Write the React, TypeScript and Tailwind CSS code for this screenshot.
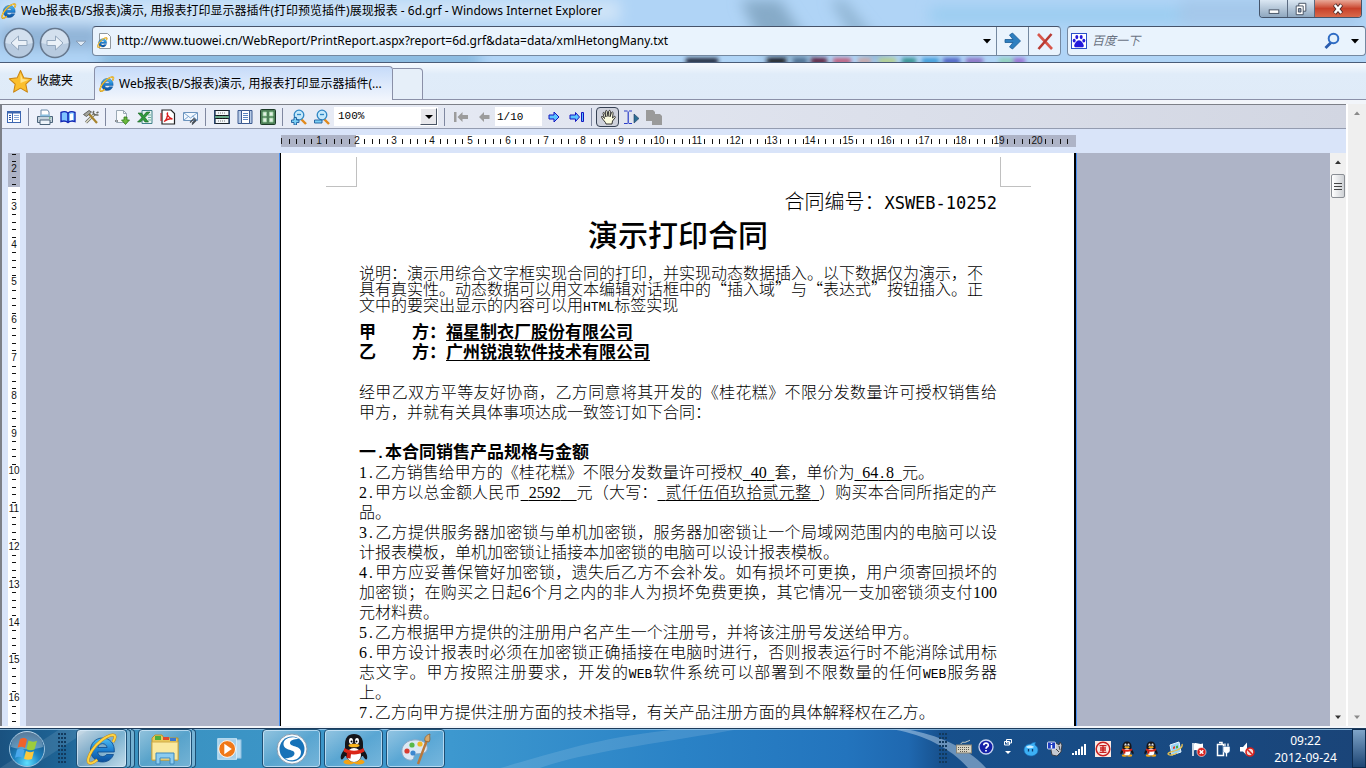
import type { ReactNode } from 'react'

const CM = 37.8

const TOP_BLOBS = [
  [686, 32, '#1c2430'], [767, 19, '#16181f'], [793, 14, '#4a6a8c'], [811, 16, '#5a1830'],
  [833, 18, '#c05a78'], [858, 13, '#c9a5a5'], [879, 17, '#b5d08a'], [902, 14, '#2f8f8a'],
  [922, 17, '#3a9ad8'], [943, 17, '#4a5cc0'], [966, 17, '#8a6cc0'], [999, 14, '#8fd0b8'], [1013, 12, '#9a6cd0'],
] as const

type Line = { text?: string; parts?: { t: string; u?: boolean }[]; justify?: boolean; bold?: boolean }

const LINES: Line[] = [
  { bold: true, parts: [{ t: '甲\u00a0\u00a0\u00a0\u00a0方：' }, { t: '福星制衣厂股份有限公司', u: true }] },
  { bold: true, parts: [{ t: '乙\u00a0\u00a0\u00a0\u00a0方：' }, { t: '广州锐浪软件技术有限公司', u: true }] },
  {},
  { justify: true, text: '经甲乙双方平等友好协商，乙方同意将其开发的《桂花糕》不限分发数量许可授权销售给' },
  { text: '甲方，并就有关具体事项达成一致签订如下合同：' },
  {},
  { bold: true, text: '一.本合同销售产品规格与金额' },
  {
    parts: [
      { t: '1.乙方销售给甲方的《桂花糕》不限分发数量许可授权' }, { t: '\u00a040\u00a0', u: true },
      { t: '套，单价为' }, { t: '\u00a064.8\u00a0', u: true }, { t: '元。' },
    ],
  },
  {
    justify: true,
    parts: [
      { t: '2.甲方以总金额人民币' }, { t: '\u00a02592\u00a0\u00a0', u: true }, { t: '元（大写：' },
      { t: '\u00a0贰仟伍佰玖拾贰元整\u00a0', u: true }, { t: '）购买本合同所指定的产' },
    ],
  },
  { text: '品。' },
  { justify: true, text: '3.乙方提供服务器加密锁与单机加密锁，服务器加密锁让一个局域网范围内的电脑可以设' },
  { text: '计报表模板，单机加密锁让插接本加密锁的电脑可以设计报表模板。' },
  { justify: true, text: '4.甲方应妥善保管好加密锁，遗失后乙方不会补发。如有损坏可更换，用户须寄回损坏的' },
  { justify: true, text: '加密锁；在购买之日起6个月之内的非人为损坏免费更换，其它情况一支加密锁须支付100' },
  { text: '元材料费。' },
  { text: '5.乙方根据甲方提供的注册用户名产生一个注册号，并将该注册号发送给甲方。' },
  { justify: true, text: '6.甲方设计报表时必须在加密锁正确插接在电脑时进行，否则报表运行时不能消除试用标' },
  { justify: true, text: '志文字。甲方按照注册要求，开发的WEB软件系统可以部署到不限数量的任何WEB服务器' },
  { text: '上。' },
  { text: '7.乙方向甲方提供注册方面的技术指导，有关产品注册方面的具体解释权在乙方。' },
]

// half-width characters take half a CJK cell
function Mixed({ text, bold }: { text: string; bold?: boolean }) {
  const runs = text.split(/([0-9]+|[A-Za-z.\u00a0]+)/).filter(Boolean)
  return (
    <>
      {runs.map((r, i) => {
        if (/^[0-9]/.test(r)) return <span key={i} className="font-['Liberation_Serif',serif] text-[16px]">{r}</span>
        if (/^[A-Za-z.\u00a0]/.test(r)) {
          return (
            <span key={i} className={bold ? "font-['Liberation_Mono',monospace] text-[15px]" : "font-['Liberation_Mono',monospace] text-[13px]"}>
              {r}
            </span>
          )
        }
        return r
      })}
    </>
  )
}

function DocLine({ line }: { line: Line }) {
  const parts: { t: string; u?: boolean }[] = line.parts ?? [{ t: line.text ?? '' }]
  return (
    <p
      className={`h-5 leading-5 whitespace-nowrap ${line.bold ? 'text-[17px] font-bold' : 'text-[16px]'} ${
        line.justify ? '[text-align-last:justify]' : ''
      }`}
    >
      {parts.map((p, i) =>
        p.u ? (
          <u key={i} className="underline-offset-2 decoration-1"><Mixed text={p.t} bold={line.bold} /></u>
        ) : (
          <Mixed key={i} text={p.t} bold={line.bold} />
        ),
      )}
    </p>
  )
}

/* ---------- icons ---------- */

function Svg({ size = 16, box = 16, children }: { size?: number; box?: number; children: ReactNode }) {
  return (
    <svg width={size} height={size} viewBox={`0 0 ${box} ${box}`} fill="none" aria-hidden="true" className="shrink-0">
      {children}
    </svg>
  )
}

function IeIcon({ size = 16 }: { size?: number }) {
  return (
    <Svg size={size} box={32}>
      <defs>
        <linearGradient id="ieBlue" x1="0" y1="0" x2="0" y2="1">
          <stop offset="0" stopColor="#4fc0f5" />
          <stop offset="0.5" stopColor="#1c7fd0" />
          <stop offset="1" stopColor="#0c4f9c" />
        </linearGradient>
      </defs>
      <path d="M16.500 5C9.500 5 4.500 10.500 4.500 17S9.500 29 16.500 29c5.300 0 9.400-3 11-7.500h-7c-.8 1.200-2.200 2-4 2-2.600 0-4.600-1.800-4.800-4.500H28.300C29 11 24 5 16.500 5Zm-4.700 9.500c.5-2.300 2.300-3.800 4.700-3.800s4.200 1.500 4.600 3.800Z" fill="url(#ieBlue)" stroke="#0d4a8c" strokeWidth="0.8" />
      <path d="M27 9C30 4.500 29.500 1.800 26.500 2 21 2.300 11 9.500 6 17.500 2.500 23 .8 28.500 3.200 30c1.800 1 5-.8 8-3.300" stroke="#c98a10" strokeWidth="3" />
      <path d="M27 9C30 4.500 29.500 1.800 26.500 2 21 2.300 11 9.500 6 17.500 2.500 23 .8 28.500 3.200 30c1.800 1 5-.8 8-3.300" stroke="#fcd345" strokeWidth="2" />
    </Svg>
  )
}

function QqIcon({ size = 16 }: { size?: number }) {
  return (
    <Svg size={size} box={32}>
      <ellipse cx="11" cy="29" rx="5.500" ry="2.600" fill="#f5a313" />
      <ellipse cx="21" cy="29" rx="5.500" ry="2.600" fill="#f5a313" />
      <path d="M7 16c-3 3-5 7-4 10 1 1.500 3-1 4-3h18c1 2 3 4.500 4 3 1-3-1-7-4-10Z" fill="#15151a" />
      <path d="M16 1C10 1 7 5 7 11v7c0 6 4 11 9 11s9-5 9-11v-7c0-6-3-10-9-10Z" fill="#15151a" />
      <ellipse cx="16" cy="22" rx="7" ry="7" fill="#fff" />
      <ellipse cx="13" cy="8" rx="2" ry="2.900" fill="#fff" />
      <ellipse cx="19" cy="8" rx="2" ry="2.900" fill="#fff" />
      <circle cx="13.500" cy="8.500" r="1" fill="#000" />
      <circle cx="18.500" cy="8.500" r="1" fill="#000" />
      <ellipse cx="16" cy="12.500" rx="5.500" ry="1.800" fill="#f8b31a" />
      <path d="M6.500 15c6 3.500 13 3.500 19 0l1 3.500c-7 4-14 4-21 0Z" fill="#dc2618" />
      <path d="M9 19l-.5 6 4 .5.5-5Z" fill="#c41c12" />
    </Svg>
  )
}

const ICONS: Record<string, ReactNode> = {
  outline: (
    <>
      <rect x="1.500" y="2.500" width="13" height="11" fill="#fff" stroke="#3c66b0" />
      <path d="M1.500 3.500h13" stroke="#3c66b0" strokeWidth="2" />
      <path d="M6.500 4v9" stroke="#3c66b0" />
      <path d="M3 6.500h2M3 8.500h2M3 10.500h2" stroke="#2a50a0" />
      <path d="M8 6.500h5M8 8.500h5M8 10.500h5" stroke="#8aa8d8" />
    </>
  ),
  print: (
    <>
      <path d="M4 7V1h6.500L12 3v4" fill="#fff" stroke="#6a8aa8" />
      <path d="M.5 7.500h15v6H.5Z" fill="#c7d4de" stroke="#4a6278" />
      <path d="M2.500 7.500 4 5.500h8l1.500 2" fill="#8ac0e0" />
      <path d="M3 11h10v4.500H3Z" fill="#eef4fa" stroke="#4a6278" />
      <path d="M12 9h1.500" stroke="#30a040" />
    </>
  ),
  book: (
    <>
      <path d="M1 3.500c3-1.500 5-1 7 .5 2-1.500 4-2 7-.5v9c-3-1-5-.7-7 1-2-1.700-4-2-7-1Z" fill="#7fc4ff" stroke="#1428b4" strokeWidth="1.400" />
      <path d="M8 4v9.500" stroke="#1428b4" strokeWidth="1.600" />
      <path d="M10 5c1-.7 2-.7 3-.5v6.500c-1-.2-2 0-3 .5Z" fill="#fff" />
    </>
  ),
  tools: (
    <>
      <path d="M3 13.500 11.500 5" stroke="#6a6a60" strokeWidth="2.800" />
      <path d="M3 13.500 11.500 5" stroke="#e8e4d0" strokeWidth="1.200" />
      <path d="M11 2c-1.500 1.500-1 4.500 4.500 4M15.500 3l-2 1" stroke="#6a6a60" strokeWidth="1.600" />
      <path d="M6 5l8 9" stroke="#a8842c" strokeWidth="2.200" />
      <path d="M.5 5.500 6 1.500l2.500 1.500-5 4.500Z" fill="#a4a49c" stroke="#4a4a46" strokeWidth="0.800" />
    </>
  ),
  exportPage: (
    <>
      <path d="M2.500 1.500h7l3 3v9h-10Z" fill="#f8fafc" stroke="#9aa8b4" />
      <path d="M9.500 1.500v3h3" stroke="#9aa8b4" />
      <path d="M1 12h4" stroke="#222" strokeDasharray="1 1" />
      <path d="M10 8h3v3h2.500l-4 4.500-4-4.500H10Z" fill="#6cb83c" stroke="#2f7a1c" strokeWidth="0.800" />
    </>
  ),
  excel: (
    <>
      <path d="M5 1.500h10v13H5Z" fill="#e8f4f2" stroke="#3f8088" />
      <path d="M11 6h3M11 8.500h3M11 11h3" stroke="#6ab0a0" />
      <path d="M1 4h3.500l2 2.500L9.500 3H13L8 8.500l3.500 4.500H8L6 10.500 3.500 13H.5L5 8.500Z" fill="#2f9a3c" stroke="#14601e" strokeWidth="0.600" />
    </>
  ),
  pdf: (
    <>
      <path d="M2 1h9l3.500 3.500V15H2Z" fill="#fff" stroke="#222" strokeWidth="1.200" />
      <path d="M1 4v8" stroke="#d01010" strokeWidth="1" />
      <path d="M4 12.500c2-1 4-5 3.500-8.500C6.800 4 7 8 12.500 10c-3-.8-6 .5-8.500 2.500" stroke="#dc1c1c" strokeWidth="1.300" />
    </>
  ),
  mail: (
    <>
      <path d="M.5 3.500h14v8H.5Z" fill="#f2f8ff" stroke="#6b93bd" />
      <path d="M1 4l6.500 5L14 4M1 11l5-4M14 11 9.500 7" stroke="#7aa4d0" />
      <path d="M7 13.500 11 9.500l1.500 1.500-3.500 3.500M9 15.500l4-4" stroke="#444c55" strokeWidth="1.200" />
    </>
  ),
  pageWidth: (
    <>
      <path d="M1 1.500h14v5H1ZM1 9.500h14v5H1Z" fill="#f4f8fa" stroke="#1a2228" />
      <path d="M.5 1v14M15.500 1v14" stroke="#28446c" strokeWidth="1.600" />
      <path d="M1 8h14" stroke="#4a9a70" strokeWidth="1.600" />
      <path d="M4 4h8M4 12h8" stroke="#777" strokeDasharray="1 1" />
      <path d="M3 6.500h10M3 9.500h10" stroke="#111" strokeDasharray="2 1" />
    </>
  ),
  page: (
    <>
      <path d="M1 1.500h14v13H1Z" fill="#b8cce8" stroke="#3c5a90" />
      <path d="M4.500 1.500h8v13h-8Z" fill="#fff" stroke="#3c5a90" />
      <path d="M6 4.500h5M6 6.500h5M6 8.500h5M6 10.500h5" stroke="#5a84c0" />
    </>
  ),
  pages: (
    <>
      <rect x="0.500" y="0.500" width="15" height="15" rx="1" fill="#4f8058" stroke="#1c3a26" />
      <path d="M3 3h3.500v4H3ZM9.500 3H13v4H9.500ZM3 9h3.500v4H3ZM9.500 9H13v4H9.500Z" fill="#e4f0e4" stroke="#9ad0a0" strokeWidth="0.800" />
    </>
  ),
  zoomIn: (
    <>
      <path d="M10 10l5 5" stroke="#e08a1c" strokeWidth="2.400" />
      <circle cx="8" cy="6" r="4.800" fill="#c4e8fb" stroke="#2f86c4" strokeWidth="1.300" />
      <path d="M6 5.500h4" stroke="#2f86c4" strokeWidth="1.300" />
      <path d="M3 8.500h2.500V11H8v2.500H5.500V16H3v-2.500H.5V11H3Z" fill="#7cd0f5" stroke="#1c5c9c" strokeWidth="0.900" />
    </>
  ),
  zoomOut: (
    <>
      <path d="M10 10l5 5" stroke="#e08a1c" strokeWidth="2.400" />
      <circle cx="8" cy="6" r="4.800" fill="#c4e8fb" stroke="#2f86c4" strokeWidth="1.300" />
      <path d="M6 5.500h4" stroke="#2f86c4" strokeWidth="1.300" />
      <path d="M.5 11h7.500v3H.5Z" fill="#7cd0f5" stroke="#1c5c9c" strokeWidth="0.900" />
    </>
  ),
  first: <path d="M1 3h2.500v10H1ZM4.500 8 9.500 3v3H15v4H9.500v3Z" fill="#9c9c9c" />,
  prev: <path d="M3 8l5-5v3h5.500v4H8v3Z" fill="#9c9c9c" />,
  next: <path d="M13 8 8 3v3H3v4h5v3Z" fill="#5cc4ff" stroke="#1414c0" />,
  last: (
    <>
      <path d="M10.500 8l-4-4.500V6H1v4h5.500v2.500Z" fill="#5cc4ff" stroke="#1414c0" />
      <path d="M12.500 3.500h2v9h-2Z" fill="#5cc4ff" stroke="#1414c0" />
    </>
  ),
  hand: (
    <path
      d="M6 15c0-2-3.500-4-4.500-7C1.300 7 2.500 7 3.500 8.500L4.500 9.500 3 4.500c-.2-1.300 1.200-1.500 1.600-.3L6 8 5.500 2.500C5.500 1.200 7 1.200 7.200 2.500L8 7.500l.7-5.300c.3-1.200 1.800-1 1.700.3L10 7.800l1.500-4.300c.5-1 1.900-.6 1.600.6L12.500 9l1.700-1.500c.9-.4 1.500.3.900 1.200L12.500 12 12 15Z"
      fill="#fdfde0"
      stroke="#222"
      strokeWidth="0.900"
    />
  ),
  textSelect: (
    <>
      <path d="M1 2h3.500M6 2h3M1 14.500h3.500M6 14.500h3M5.200 2.500v12" stroke="#2a3cc8" strokeWidth="1.200" />
      <path d="M11 5l5 4.500-5 4.500Z" fill="#2a6e94" stroke="#223a60" strokeWidth="0.600" />
    </>
  ),
  copy: <path d="M0 1h7l2 2v2h5l2 2v9H6v-4H0Z" fill="#9a9a9a" />,
}

function Tool({ name, label, active }: { name: string; label: string; active?: boolean }) {
  return (
    <button
      type="button"
      aria-label={label}
      className={`flex h-5 w-[23px] shrink-0 items-center justify-center ${
        active ? 'rounded-sm border border-gray-700 bg-[#cfd2dc]' : ''
      }`}
    >
      <Svg>{ICONS[name]}</Svg>
    </button>
  )
}

function Sep() {
  return <span className="mr-1 ml-[3px] h-[18px] w-px shrink-0 bg-[#8088a0]" />
}

/* ---------- browser chrome ---------- */

function TitleBar() {
  return (
    <div className="flex h-[26px] items-start">
      <h1 className="flex h-[22px] min-w-0 flex-1 items-center gap-1 pl-px text-[12px] text-black">
        <IeIcon />
        <span className="truncate">Web报表(B/S报表)演示, 用报表打印显示器插件(打印预览插件)展现报表 - 6d.grf - Windows Internet Explorer</span>
      </h1>
      <div className="mr-1 flex h-[18px] overflow-hidden rounded-b border border-t-0 border-[#44546a]">
        <button type="button" aria-label="最小化" className="flex w-7 items-center justify-center border-r border-[#5a6a80] bg-linear-to-b from-[#dbe7f3] via-[#b4c6d8] via-50% to-[#8fa7bf]">
          <Svg size={14}><rect x="2.500" y="9" width="11" height="4" fill="#fff" stroke="#3a4658" /></Svg>
        </button>
        <button type="button" aria-label="还原" className="flex w-[27px] items-center justify-center border-r border-[#5a6a80] bg-linear-to-b from-[#dbe7f3] via-[#b4c6d8] via-50% to-[#8fa7bf]">
          <Svg size={14}>
            <path d="M5.500 1.500h8v9h-8Z" fill="#fff" stroke="#3a4658" />
            <path d="M2.500 4.500h8v10h-8Z" fill="#fff" stroke="#3a4658" />
            <path d="M5 7.500h3v4H5Z" fill="#8fa0b4" stroke="#3a4658" />
          </Svg>
        </button>
        <button type="button" aria-label="关闭" className="flex w-[46px] items-center justify-center bg-linear-to-b from-[#e8a898] via-[#c8412a] via-50% to-[#d9694a]">
          <Svg size={14}>
            <path d="M4 3l8 10M12 3 4 13" stroke="#4a2a2a" strokeWidth="4.600" />
            <path d="M4.300 3.500l7.400 9M11.700 3.500l-7.400 9" stroke="#fff" strokeWidth="2.800" />
          </Svg>
        </button>
      </div>
    </div>
  )
}

function NavCircle({ flip }: { flip?: boolean }) {
  return (
    <button type="button" aria-label={flip ? '前进' : '后退'} className="shrink-0">
      <Svg size={32} box={32}>
        <circle cx="16" cy="16" r="14.500" fill="#b7cadf" stroke="#66788e" strokeWidth="1.600" />
        <path d="M2.500 16a13.500 13.500 0 0 1 27 0c-8 2-19 2-27 0Z" fill="#d3e0ee" />
        <path
          d={flip ? 'M24 16l-7.500-7v4.500H8v5h8.500V23Z' : 'M8 16l7.500-7v4.500H24v5h-8.500V23Z'}
          fill="#eaf1f8"
          stroke="#93a7bd"
        />
      </Svg>
    </button>
  )
}

function AddressBar() {
  const box = 'flex h-[30px] items-center rounded-sm border border-[#7488a0] border-t-[#46536a] bg-[#e9f3fd]'
  return (
    <div className="flex h-9 items-start">
      <div className="flex h-[33px] w-[92px] shrink-0 items-center gap-1 pl-[3px]">
        <div className="flex gap-1">
          <NavCircle />
          <NavCircle flip />
        </div>
        <Svg size={12}><path d="M1.500 5.500h13L8 12Z" fill="#dfeaf5" stroke="#8298b2" strokeWidth="1.200" /></Svg>
      </div>
      <div className={`${box} flex-1`}>
        <span className="relative ml-1 flex h-4 w-4 shrink-0 items-center justify-center">
          <Svg><path d="M2.500.5h8l3 3v12h-11Z" fill="#fff" stroke="#90989f" /></Svg>
          <span className="absolute top-1 left-0"><IeIcon size={11} /></span>
        </span>
        <input
          aria-label="地址"
          className="ml-1 min-w-0 flex-1 bg-transparent text-[12px] text-black outline-none"
          defaultValue="http://www.tuowei.cn/WebReport/PrintReport.aspx?report=6d.grf&data=data/xmlHetongMany.txt"
        />
        <button type="button" aria-label="地址历史" className="flex w-[18px] justify-center">
          <Svg size={8} box={8}><path d="M0 2h8L4 6.500Z" fill="#000" /></Svg>
        </button>
        <button type="button" aria-label="转到" className="flex h-full w-8 items-center justify-center border-l border-[#7488a0]">
          <Svg size={18} box={18}>
            <path d="M1 7.500h8L5.500 3 8.500 1l8 8-8 8-3-2L9 10.500H1Z" fill="#2e7fc0" stroke="#1b5a94" strokeWidth="0.800" />
          </Svg>
        </button>
        <button type="button" aria-label="停止" className="flex h-full w-8 items-center justify-center border-l border-[#7488a0]">
          <Svg size={18} box={18}>
            <path d="M2 2l14 15" stroke="#d8564a" strokeWidth="2.600" />
            <path d="M15.500 2 2.500 17" stroke="#b83a32" strokeWidth="2.600" />
          </Svg>
        </button>
      </div>
      <div className={`${box} ml-1.5 w-[299px] shrink-0`}>
        <span className="ml-[3px] flex h-4 w-4 shrink-0 items-center justify-center border border-[#2a50c8] bg-white">
          <Svg size={14}>
            <ellipse cx="5.500" cy="3.500" rx="1.700" ry="2.400" fill="#2319dc" />
            <ellipse cx="10.500" cy="3.500" rx="1.700" ry="2.400" fill="#2319dc" />
            <ellipse cx="2.500" cy="7.500" rx="1.700" ry="2.200" fill="#2319dc" />
            <ellipse cx="13.500" cy="7.500" rx="1.700" ry="2.200" fill="#2319dc" />
            <path d="M8 7c2.500 0 5.500 4 5.500 6.500S10 15 8 15s-5.500 1-5.500-1.500S5.500 7 8 7Z" fill="#2319dc" />
          </Svg>
        </span>
        <input
          aria-label="搜索"
          placeholder="百度一下"
          className="ml-[5px] min-w-0 flex-1 bg-transparent text-[12px] italic outline-none placeholder:text-gray-500"
        />
        <button type="button" aria-label="搜索" className="mr-2.5">
          <Svg size={18} box={18}>
            <path d="M8 10.500 2.500 16" stroke="#2a5cae" strokeWidth="2.800" />
            <circle cx="10.500" cy="6.500" r="4.800" fill="#e4f1fc" stroke="#2f6cc4" strokeWidth="2" />
          </Svg>
        </button>
        <button type="button" aria-label="搜索选项" className="mr-1.5">
          <Svg size={8} box={8}><path d="M0 2h8L4 6.500Z" fill="#000" /></Svg>
        </button>
      </div>
    </div>
  )
}

function TabBar() {
  return (
    <div className="flex h-[38px] items-end border-t border-[#4a5c78] bg-linear-to-b from-[#f6f9fe] via-[#e0ecf9] via-30% to-[#dfebf8]">
      <button type="button" className="flex h-full w-[94px] items-center gap-1 border-b border-[#8a90a8] pl-2 text-[12px]">
        <Svg size={25} box={24}>
          <path d="M12 1.500l3.200 7 7.500.9-5.600 5.200 1.500 7.600L12 18.400 5.400 22.200l1.500-7.600L1.300 9.400l7.500-.9Z" fill="#fbbf2d" stroke="#c98412" strokeLinejoin="round" />
          <path d="M12 4l2 5.500 6 .8-8 3.200Z" fill="#ffe38a" />
        </Svg>
        收藏夹
      </button>
      <button type="button" className="flex h-[34px] w-[299px] items-center gap-1 rounded-t border border-b-0 border-[#8a90a8] bg-linear-to-b from-[#c6dbf9] to-[#f2f6fd] pl-1 text-[12px]">
        <IeIcon />
        <span className="whitespace-nowrap">Web报表(B/S报表)演示, 用报表打印显示器插件(...</span>
      </button>
      <button type="button" aria-label="新选项卡" className="h-8 w-[30px] rounded-tr border border-l-0 border-[#8a90a8] bg-[#e6eff9]" />
      <div className="flex-1 self-stretch border-b border-[#8a90a8]" />
    </div>
  )
}

/* ---------- report viewer ---------- */

function ReportToolbar() {
  return (
    <div className="flex h-6 items-center border-b border-[#949cb0] bg-linear-to-r from-[#eef2fb] to-[#d2d6e2]">
      <Tool name="outline" label="目录" />
      <Sep />
      <Tool name="print" label="打印" />
      <Tool name="book" label="页面设置" />
      <Tool name="tools" label="打印设置" />
      <Sep />
      <Tool name="exportPage" label="导出" />
      <Tool name="excel" label="导出Excel" />
      <Tool name="pdf" label="导出PDF" />
      <Tool name="mail" label="发送邮件" />
      <Sep />
      <Tool name="pageWidth" label="页宽" />
      <Tool name="page" label="整页" />
      <Tool name="pages" label="多页" />
      <Sep />
      <Tool name="zoomIn" label="放大" />
      <Tool name="zoomOut" label="缩小" />
      <div className="relative mr-[3px] ml-px h-[19px] w-[104px] shrink-0">
        <select aria-label="显示比例" className="block h-full w-full appearance-none bg-white pl-1 font-['Liberation_Mono',monospace] text-[11px] text-black outline-none">
          <option>100%</option>
        </select>
        <span className="pointer-events-none absolute top-px right-px flex h-[17px] w-[17px] items-center justify-center border border-white border-r-gray-600 border-b-gray-600 bg-[#e8e8ec]">
          <Svg size={8} box={8}><path d="M0 2h8L4 6Z" fill="#000" /></Svg>
        </span>
      </div>
      <Sep />
      <Tool name="first" label="首页" />
      <Tool name="prev" label="上一页" />
      <input
        aria-label="页码"
        defaultValue="1/10"
        className="h-[19px] w-[47px] shrink-0 bg-white pl-0.5 font-['Liberation_Mono',monospace] text-[11px] text-black outline-none"
      />
      <Tool name="next" label="下一页" />
      <Tool name="last" label="末页" />
      <Sep />
      <Tool name="hand" label="拖动" active />
      <Tool name="textSelect" label="选择文本" />
      <Tool name="copy" label="复制" />
    </div>
  )
}

function TopRuler() {
  const ticks = Array.from({ length: 105 }, (_, i) => i)
  return (
    <svg width="795" height="12" viewBox="0 0 795 12" className="block" aria-hidden="true">
      <rect width="795" height="12" fill="#aeb4c7" />
      <rect x="75" width="643" height="12" fill="#fff" />
      {ticks.map(i => {
        const x = Math.round(i * CM / 5)
        if (i % 5 !== 0) return <rect key={i} x={x} y="4" width="1" height="5" fill="#111" />
        return i === 0
          ? <path key={i} d="M0 3v6" stroke="#222" strokeWidth="2" />
          : (
            <text key={i} x={x} y="9" textAnchor="middle" className="font-['Liberation_Sans',sans-serif] text-[10px]" fill="#111">
              {i / 5}
            </text>
          )
      })}
    </svg>
  )
}

function SideRuler() {
  const start = 2
  return (
    <svg width="12" height="574" viewBox="0 0 12 574" className="block" aria-hidden="true">
      <rect width="12" height="34" fill="#aeb4c7" />
      {Array.from({ length: 76 }, (_, i) => i - 2).map(i => {
        const y = Math.round(16 + i * CM / 5)
        return i % 5 !== 0
          ? <rect key={i} x="4" y={y} width="4" height="1" fill="#111" />
          : (
            <text key={i} x="6" y={y + 3} textAnchor="middle" className="font-['Liberation_Sans',sans-serif] text-[10px]" fill="#111">
              {start + i / 5}
            </text>
          )
      })}
    </svg>
  )
}

function ReportPage() {
  return (
    <div className="mx-auto flex h-full w-[798px] border-x border-[#4a90f0] bg-black pr-0.5 pl-px">
      <article className="flex-1 bg-white font-['Noto_Sans_CJK_SC',sans-serif] font-light text-black [text-spacing-trim:space-all]">
        <div className="flex justify-between pt-1 pr-[43px] pl-[45px]">
          <span className="h-[30px] w-[31px] border-r border-b border-[#c0c0c0]" />
          <span className="h-[30px] w-[31px] border-b border-l border-[#c0c0c0]" />
        </div>
        <div className="pr-[77px] pl-[78px]">
          <p className="h-7 text-right text-[20px] leading-7">
            合同编号：<span className="font-['DejaVu_Sans_Mono',monospace] text-[17px]">XSWEB-10252</span>
          </p>
          <h2 className="text-center text-[30px] leading-9 font-medium">演示打印合同</h2>
          <div className="mt-[13px] text-[16px] leading-4 whitespace-nowrap">
            <p className="h-4">说明：演示用综合文字框实现合同的打印，并实现动态数据插入。以下数据仅为演示，不</p>
            <p className="h-4">具有真实性。动态数据可以用文本编辑对话框中的“插入域”与“表达式”按钮插入。正</p>
            <p className="h-4">文中的要突出显示的内容可以用<Mixed text="HTML" />标签实现</p>
          </div>
          <div className="mt-[9px]">
            {LINES.map((l, i) => <DocLine key={i} line={l} />)}
          </div>
        </div>
      </article>
    </div>
  )
}

function ScrollArrow({ up, pale }: { up?: boolean; pale?: boolean }) {
  return (
    <button type="button" aria-label={up ? '向上滚动' : '向下滚动'} className="flex h-[18px] w-full items-center justify-center">
      <Svg size={8} box={8}><path d={up ? 'M1 6h6L4 2.500Z' : 'M1 2.500h6L4 6Z'} fill={pale ? '#8a8a8a' : '#333'} /></Svg>
    </button>
  )
}

function ReportViewer() {
  return (
    <div className="flex min-h-0 flex-1 border-b-2 border-[#f4f6fa] bg-[#eef0f2]">
      <div className="flex min-w-0 flex-1 flex-col border-t border-l-2 border-[#7d8088] bg-[#d9e4f9]">
        <ReportToolbar />
        <div className="flex h-6 shrink-0 items-center pr-4 pl-6">
          <div className="mx-auto flex w-[798px] pl-0.5"><TopRuler /></div>
        </div>
        <div className="flex min-h-0 flex-1">
          <div className="flex w-6 shrink-0 overflow-hidden pl-1.5">
            <div className="w-3 bg-white"><SideRuler /></div>
          </div>
          <div className="min-w-0 flex-1 overflow-hidden bg-[#aeb4c7]"><ReportPage /></div>
          <div className="flex w-4 shrink-0 flex-col bg-[#f0f0f0]">
            <ScrollArrow up />
            <div className="mx-px mt-[3px] flex h-6 flex-col items-center justify-center gap-0.5 rounded-xs border border-[#8a8e94] bg-linear-to-r from-white to-[#cfd2d6]">
              <span className="h-px w-2 bg-[#444]" />
              <span className="h-px w-2 bg-[#444]" />
              <span className="h-px w-2 bg-[#444]" />
            </div>
            <div className="flex-1" />
            <ScrollArrow />
          </div>
        </div>
      </div>
      <div className="flex w-5 shrink-0 flex-col justify-between border-l-2 border-white bg-[#efefef]">
        <ScrollArrow up pale />
        <ScrollArrow pale />
      </div>
    </div>
  )
}

/* ---------- taskbar ---------- */

function Grip() {
  return (
    <svg width="9" height="32" viewBox="0 0 9 32" aria-hidden="true" className="shrink-0">
      {Array.from({ length: 24 }, (_, i) => (
        <rect key={i} x={(i % 3) * 3} y={Math.floor(i / 3) * 4} width="2" height="2" fill="#123a5e" />
      ))}
    </svg>
  )
}

function TaskButton({ label, width, stack, bright, children }: { label: string; width: string; stack?: number; bright?: boolean; children: ReactNode }) {
  const frame = 'border border-[#1d4f74] shadow-[inset_0_0_0_1px_rgba(220,240,255,0.65)]'
  const fill = bright ? 'from-white/75 via-white/35 to-white/70' : 'from-white/45 via-white/15 to-white/30'
  return (
    <div className="flex h-[39px]">
      <button
        type="button"
        aria-label={label}
        className={`flex items-center justify-center rounded-sm bg-linear-to-br ${fill} ${frame} ${width}`}
      >
        {children}
      </button>
      {Array.from({ length: stack ?? 0 }, (_, i) => (
        <span key={i} className="h-full w-1 rounded-r-sm border border-l-0 border-[#1d4f74] bg-white/30" />
      ))}
    </div>
  )
}

const TRAY_SMALL: [string, ReactNode][] = [
  ['键盘', (
    <>
      <path d="M5 5c1-3 3-1 5-2s3-1 4-2" stroke="#d8d8c8" />
      <rect x="0.500" y="6" width="15" height="8" fill="#d8d4c4" stroke="#8a8678" />
      <path d="M2 8.500h12M2 10.500h12M4 12.500h8" stroke="#5a5850" strokeDasharray="1 1" />
    </>
  )],
  ['帮助', (
    <>
      <circle cx="8" cy="8" r="7" fill="#1420a8" stroke="#c8d4f0" strokeWidth="1.300" />
      <path d="M5.800 6.300C5.800 3.500 10.300 3.500 10.300 6.200 10.300 7.800 8 7.800 8 9.700M8 11v1.500" stroke="#fff" strokeWidth="1.700" />
    </>
  )],
  ['还原语言栏', (
    <>
      <path d="M6.500 0.500h5v3.500h-5ZM4.500 2.500h5V6h-5Z" fill="#1d5594" stroke="#fff" />
      <path d="M5 12h6l-3 3Z" fill="#fff" />
    </>
  )],
]

const TRAY: [string, ReactNode][] = [
  ['旺旺', (
    <>
      <path d="M8 3C3 3 1 6 1 9s3 6 7 6 7-2.500 7-6c0-2-1-4-3-5 0-1 0-2 1-2.500C11 1 9 2 8 3Z" fill="#3cb0f5" stroke="#1668b0" strokeWidth="0.700" />
      <path d="M3 6c2-2 6-2 8 0-2 1.500-6 2-8 0Z" fill="#c8ecff" />
      <path d="M5.500 8v2.500M9.500 8v2.500" stroke="#0c3a70" strokeWidth="1.300" />
    </>
  )],
  ['信息', (
    <>
      <path d="M9 2l3 2 1-3 2 3-1 7-4 4-5-1-1-5Z" fill="#c4c8d0" stroke="#34383e" strokeWidth="0.900" />
      <path d="M9 8l3 3M12 5l1 4" stroke="#444" />
      <rect x="0.500" y="1" width="8" height="7" rx="1" fill="#1c3cc0" stroke="#fff" strokeWidth="0.800" />
      <path d="M4.500 4V7.500M4.500 2v1" stroke="#fff" strokeWidth="1.400" />
    </>
  )],
  ['网络', <path d="M1 12h2v2H1ZM4 10h2v4H4ZM7 8h2v6H7ZM10 5.500h2V14h-2ZM13 3h2v11h-2Z" fill="#fff" />],
  ['工行', (
    <>
      <rect x="0" y="0" width="16" height="16" fill="#fbe9e4" />
      <circle cx="8" cy="8" r="6.800" stroke="#c81e1e" strokeWidth="1.500" />
      <path d="M4.500 4.700h7M4.500 11.300h7M5 7h6M5 9h6M8 4.700v6.600" stroke="#c81e1e" strokeWidth="1.300" />
    </>
  )],
  ['QQ', null],
  ['QQ', null],
  ['安全', (
    <>
      <path d="M3 4l9-3 2 10-9 3Z" fill="#9ad4f5" stroke="#e8f4fc" />
      <path d="M6 6l2-1v2.500l-2 .5Z" fill="#e04030" />
      <path d="M9 5l2-.6v2.500l-2 .6Z" fill="#4ab040" />
      <path d="M15 3c1 3-2 5-6 6.500S1 11 1 13c1 2 6 1 9-1" stroke="#e8c050" strokeWidth="1.300" />
    </>
  )],
  ['操作中心', (
    <>
      <path d="M2 2v13" stroke="#fff" strokeWidth="1.500" />
      <path d="M3 2.500c3-1.500 5 1.500 9 0v7c-4 1.500-6-1.500-9 0Z" fill="#fff" />
      <circle cx="10.500" cy="11" r="4.500" fill="#d8201c" stroke="#fff" strokeWidth="0.600" />
      <path d="M8.700 9.200l3.600 3.600M12.300 9.200l-3.600 3.600" stroke="#fff" strokeWidth="1.500" />
    </>
  )],
  ['电源', (
    <>
      <path d="M2.500 3.500h6v11h-6ZM4 1.500h3v2" stroke="#fff" strokeWidth="1.500" />
      <path d="M8 5.500h7v4c0 2-2 3-3.500 3S8 11 8 9.500Z" fill="#fff" stroke="#1d5594" strokeWidth="0.500" />
      <path d="M10 2.500v3M13 2.500v3M11.500 12v3.500" stroke="#fff" strokeWidth="1.300" />
    </>
  )],
  ['音量', (
    <>
      <path d="M1 6h3l4-4.500v13L4 10.500H1Z" fill="#fff" />
      <circle cx="11" cy="11" r="4" fill="#f4dcd8" stroke="#d8201c" strokeWidth="1.600" />
      <path d="M8.300 8.300l5.400 5.400" stroke="#d8201c" strokeWidth="1.600" />
    </>
  )],
]

function StartOrb() {
  return (
    <button type="button" aria-label="开始" className="flex w-[54px] shrink-0 justify-center">
      <Svg size={38} box={38}>
        <defs>
          <radialGradient id="orb" cx="0.5" cy="0.9" r="0.9">
            <stop offset="0" stopColor="#5fe0ff" />
            <stop offset="0.4" stopColor="#1f86c4" />
            <stop offset="1" stopColor="#123f6c" />
          </radialGradient>
        </defs>
        <circle cx="19" cy="19" r="17.500" fill="url(#orb)" stroke="#9cc4e0" />
        <path d="M3 17a16 16 0 0 1 32 0c-9 3-23 3-32 0Z" fill="#fff" fillOpacity="0.300" />
        <path d="M12 9c3-1.500 5-1 7 .4L17 18c-2.500-1.500-4.500-1.500-7.500-.2Z" fill="#f0622c" />
        <path d="M20.500 10.500c3 1.500 5.500 1.500 8.500.2L26.500 19.500c-3 1-5.500 1-8-.5Z" fill="#9ccc3c" />
        <path d="M9 19.500c3-1.300 5-1 7.500.4L14.500 28c-2.500-1.500-4.500-1.500-7.500-.2Z" fill="#4aa8ec" />
        <path d="M18 21c2.500 1.500 5 1.500 8 .2L24 29c-3 1.200-5.500 1-8-.2Z" fill="#fcc83c" />
      </Svg>
    </button>
  )
}

function Taskbar() {
  return (
    <footer className="relative flex h-10 shrink-0 items-center overflow-hidden border-t border-[#1d3c5c] bg-[#2374bd]">
      <svg className="absolute inset-0 h-full w-full" viewBox="0 0 1366 39" preserveAspectRatio="none" aria-hidden="true">
        <defs>
          <linearGradient id="barBase" x1="0" x2="1" y1="0" y2="0">
            <stop offset="0" stopColor="#1a5280" />
            <stop offset="0.05" stopColor="#1f6698" />
            <stop offset="0.1" stopColor="#3a92c0" />
            <stop offset="0.33" stopColor="#3d98cf" />
            <stop offset="0.5" stopColor="#2a82c6" />
            <stop offset="0.62" stopColor="#2374bd" />
            <stop offset="0.665" stopColor="#1f68b0" />
            <stop offset="0.69" stopColor="#17508c" />
            <stop offset="1" stopColor="#1a4478" />
          </linearGradient>
        </defs>
        <rect width="1366" height="39" fill="url(#barBase)" />
        <path d="M0 39 60 0h30L30 39Z" fill="#fff" fillOpacity="0.100" />
        <path d="M500 39C560 22 600 8 680 0h60C660 14 580 24 540 39Z" fill="#fff" fillOpacity="0.120" />
        <path d="M890 0c30 4 60 18 78 39h18C966 16 930 4 905 0Z" fill="#cfe2f5" fillOpacity="0.450" />
        <rect width="1366" height="1" fill="#9cc8e8" fillOpacity="0.800" />
      </svg>
      <div className="relative flex w-full items-center">
        <StartOrb />
        <div className="mr-[9px] ml-1"><Grip /></div>
        <div className="flex items-center gap-[3px]">
          <TaskButton label="Internet Explorer" width="w-[51px]" stack={2} bright><IeIcon size={32} /></TaskButton>
          <TaskButton label="资源管理器" width="w-[54px]" stack={1}>
            <Svg size={32} box={32}>
              <path d="M3 5l3-3h7l2 3h14v22H3Z" fill="#e8c75a" stroke="#b8922c" />
              <path d="M6 3h6v4H6Z" fill="#4cae3c" />
              <path d="M14 4h6v3h-6Z" fill="#e0482c" />
              <path d="M21 5h6v3h-6Z" fill="#3c78d0" />
              <path d="M3 9h26v18H3Z" fill="#fae9a0" stroke="#d0ac48" />
              <path d="M7 31V20h18v11h-4v-6H11v6Z" fill="#8cccf0" stroke="#3c88bc" />
            </Svg>
          </TaskButton>
          <button type="button" aria-label="Windows Media Player" className="flex h-[39px] w-[60px] items-center justify-center">
            <Svg size={28} box={30}>
              <path d="M22 5h6v20h-6Z" fill="#b8dcf2" stroke="#7cb4d8" />
              <rect x="3" y="4" width="20" height="22" fill="#a4cfea" stroke="#d4ecfa" />
              <circle cx="13" cy="15" r="9" fill="#f07818" stroke="#fff" />
              <path d="M10 9.500v11l8-5.500Z" fill="#fff" />
            </Svg>
          </button>
          <TaskButton label="搜狗浏览器" width="w-[59px]">
            <Svg size={32} box={32}>
              <circle cx="16" cy="16" r="15" fill="#f8fbfd" stroke="#8a9cae" />
              <circle cx="16" cy="16" r="12.500" fill="#1772b8" />
              <path d="M23 6C16 2 7 5.500 7.500 11.500c.5 6.500 11.500 4.500 11 9-.4 3.500-5 4.500-9.500 5C14 29 25 27.500 25 19c0-6.500-11-5-11-9 0-2.800 4-4 9-4Z" fill="#fff" />
            </Svg>
          </TaskButton>
          <TaskButton label="QQ" width="w-[59px]"><QqIcon size={32} /></TaskButton>
          <TaskButton label="画图" width="w-[59px]">
            <Svg size={32} box={32}>
              <path d="M13 7C5 8 1 14 2 20c1 5 6 8 10 7 3-1 1-5 4-6s9 1 11-4C29 10 21 6 13 7Z" fill="#dbe8f4" stroke="#8ca8c4" />
              <circle cx="12" cy="12" r="2.600" fill="#58b848" />
              <circle cx="20" cy="11" r="2.600" fill="#f0b828" />
              <circle cx="7" cy="18" r="2.600" fill="#d83c30" />
              <circle cx="13" cy="20" r="2.600" fill="#3c88d0" />
              <path d="M18 31 27 7" stroke="#b8783c" strokeWidth="2.400" />
              <path d="M25 8c-1-3 1-6 5-7-1 3 1 5-1 8Z" fill="#d8a868" stroke="#8c5c2c" strokeWidth="0.700" />
            </Svg>
          </TaskButton>
        </div>
        <div className="ml-auto flex items-center text-white">
          <div className="mr-[5px]"><Grip /></div>
          {TRAY_SMALL.map(([label, icon]) => (
            <button key={label} type="button" aria-label={label} className="flex w-[22px] justify-center pb-1"><Svg>{icon}</Svg></button>
          ))}
          {TRAY.map(([label, icon], i) => (
            <button key={i} type="button" aria-label={label} className="flex w-6 justify-center">
              {icon ? <Svg>{icon}</Svg> : <QqIcon />}
            </button>
          ))}
          <div className="w-[93px] text-center text-[12px] leading-[17px]">
            <div>09:22</div>
            <div>2012-09-24</div>
          </div>
          <button type="button" aria-label="显示桌面" className="h-[39px] w-[14px] border border-[#0c2c50] bg-linear-to-b from-[#7fa4c8] to-[#1d4674]" />
        </div>
      </div>
    </footer>
  )
}

export default function App() {
  return (
    <div className="flex h-screen w-full flex-col overflow-hidden bg-[#f2f5fa] font-['Noto_Sans','Noto_Sans_CJK_SC',sans-serif]">
      <header className="shrink-0">
        <div className="relative bg-[#b0d4f6]">
          <svg className="absolute inset-0 h-full w-full" viewBox="0 0 1366 62" preserveAspectRatio="none" aria-hidden="true">
            <defs>
              <filter id="soft" x="-20%" y="-20%" width="140%" height="140%"><feGaussianBlur stdDeviation="7" /></filter>
              <filter id="blob" x="-20%" y="-40%" width="140%" height="180%"><feGaussianBlur stdDeviation="2" /></filter>
            </defs>
            <g filter="url(#soft)">
              <rect x="0" y="0" width="620" height="22" fill="#cfe4f8" />
              <rect x="0" y="26" width="100" height="22" fill="#8fb2d6" />
              <rect x="100" y="50" width="380" height="20" fill="#86b8de" />
              <path d="M740 0h40l40 62h-50Z" fill="#86aac8" />
              <path d="M830 0h14l50 62h-26Z" fill="#8fb4d2" />
              <path d="M930 8h330v14H930Z" fill="#98ccf0" />
              <path d="M1180 0h180v26h-180Z" fill="#a4c8ea" />
            </g>
            <g filter="url(#blob)">
              {TOP_BLOBS.map(([x, w, c]) => <rect key={x} x={x} y="58" width={w} height="6" fill={c} />)}
            </g>
          </svg>
          <div className="relative">
            <TitleBar />
            <AddressBar />
          </div>
        </div>
        <TabBar />
        <div className="h-1 bg-[#f2f5fa]" />
      </header>
      <ReportViewer />
      <Taskbar />
    </div>
  )
}
